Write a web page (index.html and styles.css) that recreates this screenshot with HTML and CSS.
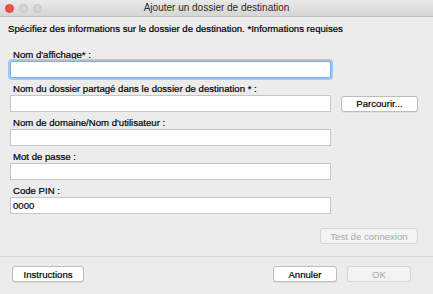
FILE: index.html
```html
<!DOCTYPE html>
<html lang="fr">
<head>
    <meta charset="UTF-8">
    <title>Ajouter un dossier de destination</title>
    <link rel="stylesheet" href="styles.css">
</head>
<body>
    <div class="window">
        <div class="titlebar">
            <div class="lights">
                <span class="light light-close"></span>
                <span class="light"></span>
                <span class="light"></span>
            </div>
            <div class="title">Ajouter un dossier de destination</div>
        </div>

        <div class="content">
            <p class="intro">Spécifiez des informations sur le dossier de destination. *Informations requises</p>

            <div class="field">
                <label>Nom d'affichage* :</label>
                <input type="text" class="input input-focus">
            </div>

            <div class="field">
                <label>Nom du dossier partagé dans le dossier de destination * :</label>
                <div class="row">
                    <input type="text" class="input">
                    <button class="btn btn-browse">Parcourir...</button>
                </div>
            </div>

            <div class="field">
                <label>Nom de domaine/Nom d'utilisateur :</label>
                <input type="text" class="input">
            </div>

            <div class="field">
                <label>Mot de passe :</label>
                <input type="password" class="input">
            </div>

            <div class="field">
                <label>Code PIN :</label>
                <input type="text" class="input" value="0000">
            </div>

            <div class="test-row">
                <button class="btn btn-test" disabled>Test de connexion</button>
            </div>
        </div>

        <div class="footer">
            <button class="btn btn-help">Instructions</button>
            <div class="footer-right">
                <button class="btn btn-dialog">Annuler</button>
                <button class="btn btn-dialog" disabled>OK</button>
            </div>
        </div>
    </div>
</body>
</html>
```

FILE: styles.css
```css
* {
    margin: 0;
    padding: 0;
    box-sizing: border-box;
}

body {
    font-family: "Liberation Sans", Arial, sans-serif;
    font-size: 9.6px;
    line-height: 13px;
    color: #000;
    background: #ececec;
    -webkit-text-stroke: 0.2px;
}

.window {
    width: 433px;
    height: 294px;
    background: #ececec;
    display: flex;
    flex-direction: column;
}

.titlebar {
    flex-shrink: 0;
    height: 17px;
    background: linear-gradient(#e9e9e9, #d5d5d5);
    border-bottom: 1px solid #bdbdbd;
    display: flex;
    align-items: center;
    position: relative;
}

.lights {
    display: flex;
    gap: 5px;
    padding-left: 5px;
}

.light {
    width: 9px;
    height: 9px;
    border-radius: 50%;
    background: #d3d3d3;
    border: 1px solid #c4c4c4;
}

.light-close {
    background: #fc4f4a;
    border-color: #e0403b;
}

.title {
    position: absolute;
    left: 0;
    right: 0;
    top: 1px;
    text-align: center;
    font-size: 10px;
    line-height: 14px;
    color: #2a2a2a;
    -webkit-text-stroke: 0;
}

.content {
    flex-shrink: 0;
    padding: 5px 12px 0 10px;
}

.intro {
    margin-left: -2px;
    margin-bottom: 13px;
}

.field {
    display: flex;
    flex-direction: column;
    margin-bottom: 4px;
}

.field label {
    padding-left: 3px;
}

.row {
    display: flex;
    align-items: center;
    gap: 10px;
}

.input {
    width: 321px;
    height: 17px;
    border: 1px solid #c6c6c6;
    background: #fff;
    font-family: inherit;
    font-size: 9.6px;
    padding: 0 2px;
    color: #000;
    outline: none;
}

.input-focus {
    border: 1px solid #7aaee6;
    box-shadow: 0 0 0 2px #a3c8f0;
    border-radius: 2px;
}

.btn {
    font-family: inherit;
    font-size: 9.6px;
    height: 16px;
    background: #fff;
    border: 1px solid #bdbdbd;
    border-radius: 3px;
    box-shadow: 0 1px 0 rgba(0, 0, 0, 0.06);
    color: #000;
    cursor: pointer;
}

.btn:disabled {
    background: #f3f3f3;
    border-color: #d4d4d4;
    color: #a9a9a9;
    box-shadow: none;
    -webkit-text-stroke: 0;
}

.btn-browse {
    width: 77px;
}

.test-row {
    display: flex;
    justify-content: flex-end;
    padding-top: 10px;
    padding-right: 3px;
}

.btn-test {
    width: 98px;
}

.footer {
    margin-top: auto;
    flex-shrink: 0;
    border-top: 1px solid #d6d6d6;
    height: 38px;
    display: flex;
    justify-content: space-between;
    align-items: flex-start;
    padding: 9px 22px 0 12px;
}

.footer-right {
    display: flex;
    gap: 10px;
}

.btn-help {
    width: 72px;
}

.btn-dialog {
    width: 64px;
}
```
